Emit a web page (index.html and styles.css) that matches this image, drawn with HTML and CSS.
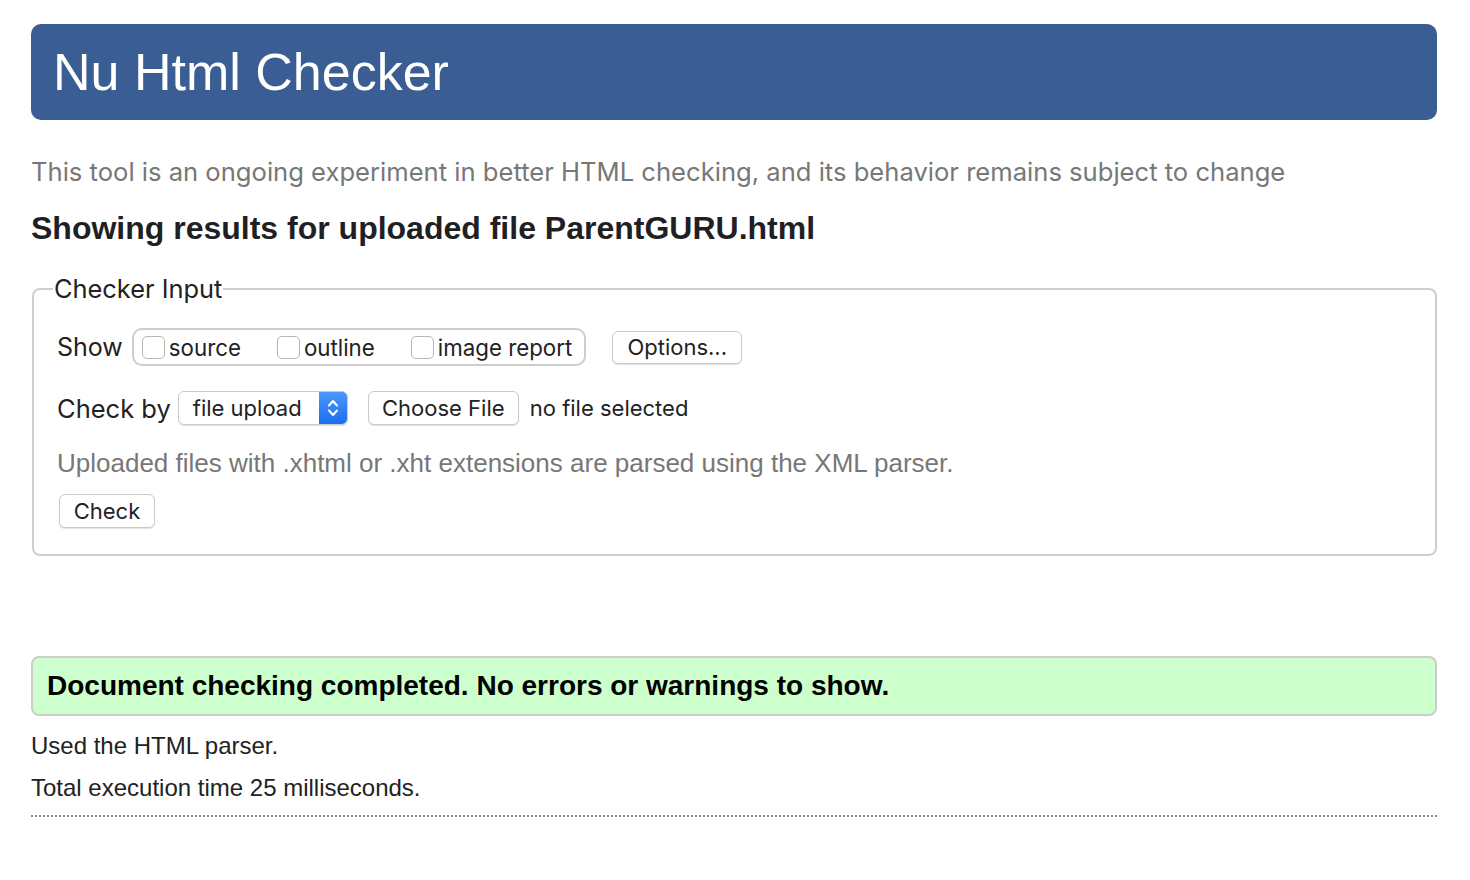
FILE: index.html
```html
<!DOCTYPE html>
<html lang="en">
<head>
<meta charset="utf-8">
<title>Showing results for uploaded file ParentGURU.html - Nu Html Checker</title>
<link rel="stylesheet" href="styles.css">
</head>
<body>
<h1 class="title">Nu Html Checker</h1>
<p class="intro">This tool is an ongoing experiment in better HTML checking, and its behavior remains subject to change</p>
<h2 class="results-title">Showing results for uploaded file ParentGURU.html</h2>
<fieldset class="input-set">
  <legend class="input-legend">Checker Input</legend>
  <div class="row row-show">
    <span class="row-label">Show</span>
    <span class="show-group">
      <label class="opt opt-source"><span class="box"></span>source</label>
      <label class="opt opt-outline"><span class="box"></span>outline</label>
      <label class="opt opt-image"><span class="box"></span>image report</label>
    </span>
    <span class="btn btn-options">Options...</span>
  </div>
  <div class="row row-check">
    <span class="row-label row-label-check">Check by</span>
    <span class="select">
      <span class="select-text">file upload</span>
      <span class="select-stepper">
        <svg width="14" height="24" viewBox="0 0 14 24" aria-hidden="true"><path d="M3 9.5 L7 5 L11 9.5" fill="none" stroke="#fff" stroke-width="2" stroke-linecap="round" stroke-linejoin="round"/><path d="M3 14.5 L7 19 L11 14.5" fill="none" stroke="#fff" stroke-width="2" stroke-linecap="round" stroke-linejoin="round"/></svg>
      </span>
    </span>
    <span class="btn btn-file">Choose File</span>
    <span class="file-status">no file selected</span>
  </div>
  <p class="hint">Uploaded files with .xhtml or .xht extensions are parsed using the XML parser.</p>
  <div class="row row-submit">
    <span class="btn btn-check">Check</span>
  </div>
</fieldset>
<p class="success">Document checking completed. No errors or warnings to show.</p>
<p class="stat stat-parser">Used the HTML parser.</p>
<p class="stat stat-time">Total execution time 25 milliseconds.</p>
<hr class="end-rule">
</body>
</html>
```
FILE: styles.css
```css
html, body {
  margin: 0;
  padding: 0;
  background: #fff;
}
body {
  padding: 24px 33px 40px 31px;
  font-family: "Liberation Sans", Arial, sans-serif;
  color: #222;
}
.title {
  margin: 0;
  height: 96px;
  line-height: 96px;
  padding-left: 22px;
  background: #3a5e93;
  border-radius: 10px;
  color: #fff;
  font-weight: normal;
  font-size: 52px;
}
.intro {
  margin: 36px 0 0 0;
  font-family: Inter, "Noto Sans", sans-serif;
  font-size: 25.6px;
  line-height: 32px;
  color: #777;
}
.results-title {
  margin: 20px 0 0 0;
  font-size: 32px;
  line-height: 40px;
  font-weight: bold;
  color: #1f1f24;
}
.input-set {
  margin: 26px 0 0 1px;
  padding: 24px 24px 26px 23px;
  border: 2px solid #cfcfcf;
  border-radius: 8px;
  font-family: Inter, "Noto Sans", sans-serif;
}
.input-legend {
  padding: 0 1px;
  margin-left: -4px;
  font-size: 25.4px;
  line-height: 30px;
  color: #222;
}
.row {
  display: flex;
  align-items: center;
}
.row-label {
  font-size: 25px;
  color: #222;
  margin-right: 9px;
}
.row-label-check {
  font-size: 25.5px;
  margin-right: 7px;
}
.show-group {
  display: flex;
  align-items: center;
  height: 34px;
  padding: 0 12px 0 8px;
  border: 2px solid #cdcdcd;
  border-radius: 10px;
}
.opt {
  display: flex;
  align-items: center;
  font-size: 22.3px;
  color: #222;
}
.opt-source, .opt-outline {
  margin-right: 36px;
}
.box {
  box-sizing: border-box;
  width: 23px;
  height: 23px;
  border: 1px solid #b5b5b5;
  border-radius: 5px;
  margin-right: 4px;
  background: #fff;
}
.btn {
  display: inline-flex;
  align-items: center;
  justify-content: center;
  box-sizing: border-box;
  border: 1px solid #c9c9c9;
  border-radius: 6px;
  background: #fff;
  box-shadow: 0 1px 1px rgba(0,0,0,0.12);
  font-size: 22px;
  color: #222;
}
.btn-options {
  width: 130px;
  height: 33px;
  margin-left: 26px;
}
.row-check {
  margin-top: 25px;
}
.select {
  display: flex;
  align-items: stretch;
  box-sizing: border-box;
  width: 170px;
  height: 34px;
  border: 1px solid #c9c9c9;
  border-radius: 6px;
  box-shadow: 0 1px 1px rgba(0,0,0,0.12);
  overflow: hidden;
}
.select-text {
  flex: 1;
  display: flex;
  align-items: center;
  padding-left: 14px;
  font-size: 22px;
  color: #222;
}
.select-stepper {
  width: 28px;
  display: flex;
  align-items: center;
  justify-content: center;
  background: linear-gradient(#4b97fb, #1a6ff0);
}
.btn-file {
  width: 151px;
  height: 34px;
  margin-left: 20px;
}
.file-status {
  margin-left: 11px;
  font-size: 22px;
  color: #222;
}
.hint {
  margin: 22px 0 0 0;
  font-family: "Liberation Sans", Arial, sans-serif;
  font-size: 26px;
  line-height: 32px;
  color: #777;
}
.row-submit {
  margin-top: 15px;
}
.btn-check {
  width: 96px;
  height: 34px;
  margin-left: 2px;
}
.success {
  margin: 100px 0 0 0;
  height: 56px;
  line-height: 56px;
  padding-left: 14px;
  background: #ccffcc;
  border: 2px solid #cccccc;
  border-radius: 8px;
  font-size: 28px;
  font-weight: bold;
  color: #000;
}
.stat {
  margin: 0;
  font-size: 24px;
  line-height: 42px;
  color: #222;
}
.stat-parser {
  margin-top: 9px;
}
.end-rule {
  margin: 6px 0 0 0;
  border: 0;
  border-top: 2px dotted #888;
  height: 0;
}
```
